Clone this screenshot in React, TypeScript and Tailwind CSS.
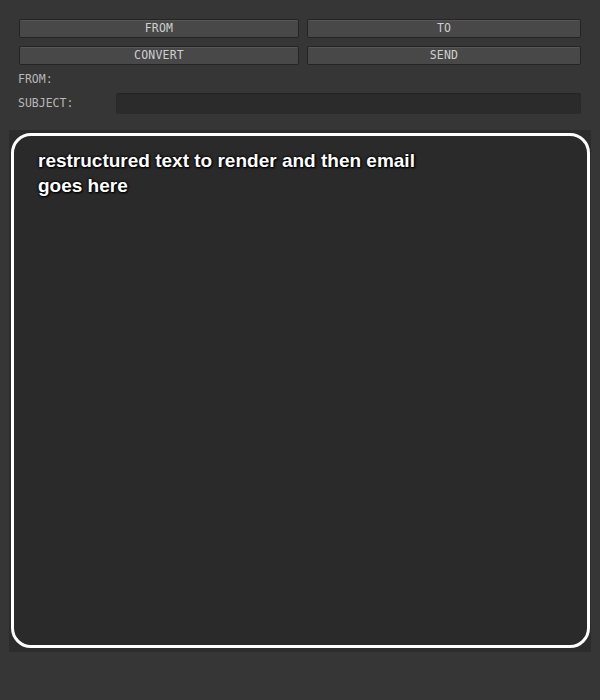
export default function App() {
  const mono = "font-['DejaVu_Sans_Mono',monospace] text-[11.5px]";
  const btn =
    "h-[19px] rounded-[2px] border border-[#242424] bg-[#484848] shadow-[inset_0_1px_0_#575757] text-[#cfcfcf] leading-[17px] text-center tracking-[0.2px] " +
    mono;

  return (
    <div className="min-h-[700px] w-[600px] bg-[#363636]">
      {/* Buttons */}
      <div className="pt-[19px] pl-[19px] grid grid-cols-[280px_274px] gap-x-2 gap-y-2">
        <button className={btn}>FROM</button>
        <button className={btn}>TO</button>
        <button className={btn}>CONVERT</button>
        <button className={btn}>SEND</button>
      </div>

      {/* From / Subject */}
      <div className={`mt-[7px] pl-[18px] h-[14px] leading-[14px] text-[#b8b8b8] ${mono}`}>FROM:</div>
      <div className="mt-[7px] pl-[18px] flex items-center h-[21px]">
        <span className={`w-[98px] text-[#b8b8b8] ${mono}`}>SUBJECT:</span>
        <div className="w-[465px] h-[21px] rounded-[3px] bg-[#2b2b2b] shadow-[inset_0_1px_1px_#252525]" />
      </div>

      {/* Editor */}
      <div className="mt-[16px] ml-[9px] w-[582px] h-[522px] bg-[#2c2c2c] pt-[3px] pl-[2px]">
        <div className="w-[579px] h-[515px] border-[3px] border-white rounded-[20px] bg-[#2a2a2a] pt-[12px] pl-[24px]">
          <p className="w-[410px] font-['Liberation_Sans',Arial,sans-serif] font-bold text-[19px] leading-[25px] text-white [text-shadow:0_0_2px_#000,0_0_3px_#000,1px_1px_2px_#000]">
            restructured text to render and then email goes here
          </p>
        </div>
      </div>
    </div>
  );
}
